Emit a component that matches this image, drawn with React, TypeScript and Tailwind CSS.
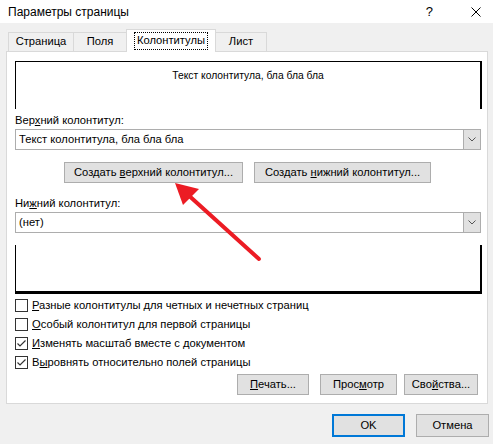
import React from "react";

function Btn({ children, className = "" }: { children: React.ReactNode; className?: string }) {
  return (
    <div
      className={
        "h-[21px] bg-[#e1e1e1] border border-[#adadad] flex items-center justify-center whitespace-nowrap " +
        className
      }
    >
      {children}
    </div>
  );
}

function Select({ value }: { value: string }) {
  return (
    <div className="h-[21px] w-[466px] bg-white border border-[#adadad] flex items-stretch">
      <div className="flex-1 flex items-center pl-[3px]">{value}</div>
      <div className="w-[17px] bg-[#e1e1e1] border-l border-[#adadad] flex items-center justify-center">
        <svg width="8" height="5" viewBox="0 0 8 5">
          <polyline points="0.5,0.5 4,4 7.5,0.5" fill="none" stroke="#555" strokeWidth="1" />
        </svg>
      </div>
    </div>
  );
}

function Check({ checked, children }: { checked: boolean; children: React.ReactNode }) {
  return (
    <div className="h-[19px] flex items-center">
      <div className="w-[13px] h-[13px] border border-[#333] bg-white flex items-center justify-center">
        {checked && (
          <svg width="11" height="11" viewBox="0 0 11 11">
            <polyline points="1.5,5.5 4,8 9.5,2.5" fill="none" stroke="#333" strokeWidth="1.2" />
          </svg>
        )}
      </div>
      <span className="ml-[4px]">{children}</span>
    </div>
  );
}

export default function App() {
  return (
    <div className="relative w-[493px] h-[444px] bg-[#f0f0f0] overflow-hidden text-black text-[11.2px] leading-none font-['Liberation_Sans',Arial,sans-serif]">
      {/* Title bar */}
      <div className="h-[23px] bg-white flex items-center pl-[8px]">
        <span className="text-[12px]">Параметры страницы</span>
        <span className="ml-auto mr-[38px] text-[13px]">?</span>
        <svg width="10" height="10" viewBox="0 0 10 10" className="mr-[12px]">
          <line x1="0.5" y1="0.5" x2="9.5" y2="9.5" stroke="#000" strokeWidth="1" />
          <line x1="9.5" y1="0.5" x2="0.5" y2="9.5" stroke="#000" strokeWidth="1" />
        </svg>
      </div>

      {/* Tabs */}
      <div className="flex items-end h-[28px] pl-[8px]">
        <div className="h-[19px] w-[66px] border border-b-0 border-[#d9d9d9] flex items-center justify-center">
          Страница
        </div>
        <div className="h-[19px] w-[54px] -ml-px border border-b-0 border-[#d9d9d9] flex items-center justify-center">
          Поля
        </div>
        <div className="relative z-10 -mb-px h-[23px] w-[90px] -ml-px bg-white border border-b-0 border-[#d9d9d9] flex items-center justify-center">
          <span className="border border-dotted border-black px-[2px] py-[2px]">Колонтитулы</span>
        </div>
        <div className="h-[19px] w-[52px] -ml-px border border-b-0 border-[#d9d9d9] flex items-center justify-center">
          Лист
        </div>
      </div>

      {/* Panel */}
      <div className="ml-[6px] w-[482px] h-[353px] bg-white border border-[#d9d9d9] pt-[9px] pl-[8px]">
        <div className="w-[467px] flex flex-col">
          <div className="h-[48px] border-t border-l border-r-2 border-black flex justify-center pt-[9px] text-[10.3px]">
            Текст колонтитула, бла бла бла
          </div>
          <div className="mt-[4px] h-[16px] flex items-center">
            <span>
              Вер<span className="underline">х</span>ний колонтитул:
            </span>
          </div>
          <Select value="Текст колонтитула, бла бла бла" />
          <div className="mt-[12px] flex">
            <Btn className="ml-[49px] w-[179px]">
              <span>
                Создать <span className="underline">в</span>ерхний колонтитул...
              </span>
            </Btn>
            <Btn className="ml-[11px] w-[177px]">
              <span>
                Создать <span className="underline">н</span>ижний колонтитул...
              </span>
            </Btn>
          </div>
          <div className="mt-[13px] h-[16px] flex items-center">
            <span>
              Ни<span className="underline">ж</span>ний колонтитул:
            </span>
          </div>
          <Select value="(нет)" />
          <div className="mt-[12px] h-[49px] border-l border-r-2 border-b-[3px] border-black" />
          <div className="mt-[2px] flex flex-col">
            <Check checked={false}>
              <span className="underline">Р</span>азные колонтитулы для четных и нечетных страниц
            </Check>
            <Check checked={false}>
              <span className="underline">О</span>собый колонтитул для первой страницы
            </Check>
            <Check checked={true}>
              <span className="underline">И</span>зменять масштаб вместе с документом
            </Check>
            <Check checked={true}>
              В<span className="underline">ы</span>ровнять относительно полей страницы
            </Check>
          </div>
          <div className="mt-[2px] flex">
            <Btn className="ml-[222px] w-[72px]">
              <span>
                <span className="underline">П</span>ечать...
              </span>
            </Btn>
            <Btn className="ml-[11px] w-[77px]">
              <span>
                Прос<span className="underline">м</span>отр
              </span>
            </Btn>
            <Btn className="ml-[7px] w-[74px]">
              <span>
                Сво<span className="underline">й</span>ства...
              </span>
            </Btn>
          </div>
        </div>
      </div>

      {/* Bottom buttons */}
      <div className="mt-[10px] flex">
        <div className="ml-[332px] w-[73px] h-[23px] bg-[#e1e1e1] border-2 border-[#0078d7] flex items-center justify-center">
          OK
        </div>
        <div className="ml-[11px] w-[73px] h-[23px] bg-[#e1e1e1] border border-[#adadad] flex items-center justify-center">
          Отмена
        </div>
      </div>

      {/* Red arrow annotation */}
      <svg className="absolute left-0 top-0 pointer-events-none" width="493" height="444" viewBox="0 0 493 444">
        <line x1="259" y1="259" x2="186" y2="193" stroke="#ec1c24" strokeWidth="4" strokeLinecap="round" />
        <polygon points="175,183 183,205 199,189" fill="#ec1c24" />
      </svg>
    </div>
  );
}
